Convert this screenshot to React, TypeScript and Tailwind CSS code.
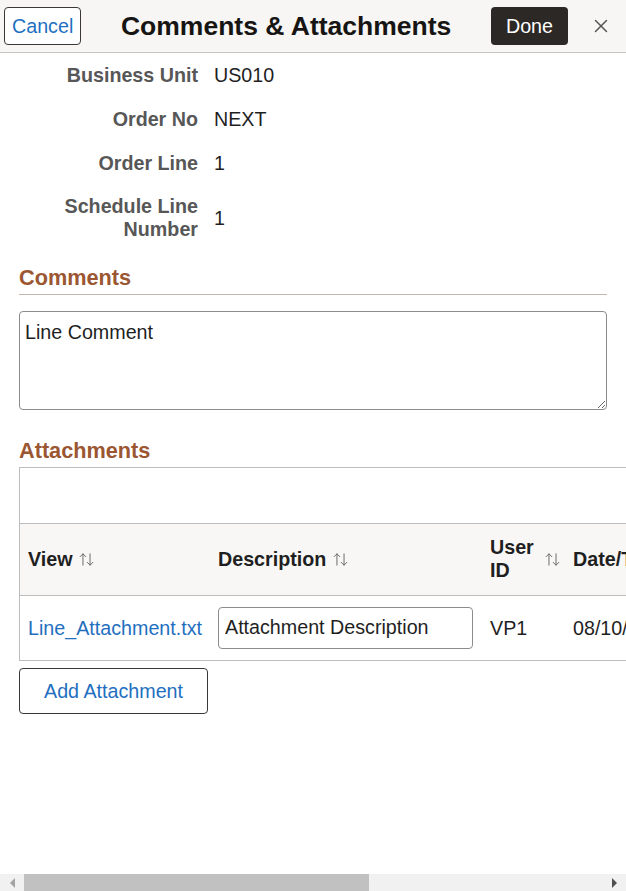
import React from 'react';
import { X, ArrowUpDown } from 'lucide-react';

const font = { fontFamily: '"Liberation Sans", Arial, sans-serif' };

const fields = [
  { label: 'Business Unit', value: 'US010' },
  { label: 'Order No', value: 'NEXT' },
  { label: 'Order Line', value: '1' },
];

const SortIcon = () => (
  <ArrowUpDown className="inline-block h-[17px] w-[17px] align-[-2px] text-[#6b6b6b]" strokeWidth={1.4} />
);

// static horizontal scrollbar shown at the bottom of the dialog
const ScrollBar = () => (
  <div className="flex h-[17px] shrink-0 items-center bg-[#f1f1f1]">
    <div className="flex w-[24px] justify-center">
      <div className="h-0 w-0 border-y-[5px] border-r-[5px] border-y-transparent border-r-[#a3a3a3]" />
    </div>
    <div className="h-full w-[345px] self-end bg-[#c1c1c1]" />
    <div className="flex-1" />
    <div className="flex w-[24px] justify-center">
      <div className="h-0 w-0 border-y-[5px] border-l-[5px] border-y-transparent border-l-[#505050]" />
    </div>
  </div>
);

export default function App() {
  return (
    <div className="flex h-[891px] w-full flex-col overflow-hidden bg-white text-[19.7px] leading-[24px] text-[#1f1f1f]" style={font}>
      {/* Header */}
      <div className="flex h-[53px] shrink-0 items-center border-b border-[#c8c4bf] bg-[#f7f6f4] pl-1 pr-[14px]">
        <button className="h-[38px] rounded-[4px] border border-[#3b3835] bg-white px-[7px] text-[19.7px] text-[#1f6fbf]">
          Cancel
        </button>
        <h1 className="flex-1 text-center text-[26.5px] font-bold text-[#161513]">Comments &amp; Attachments</h1>
        <button className="h-[38px] rounded-[4px] bg-[#2b2825] px-[15px] text-[19.7px] text-white">Done</button>
        <X className="ml-[22px] h-[22px] w-[22px] text-[#555]" strokeWidth={1.6} />
      </div>

      {/* Body */}
      <div className="flex-1 overflow-hidden">
        <div className="w-full">
          <div>
            {fields.map((f) => (
              <div key={f.label} className="flex h-[44px] items-center">
                <div className="w-[198px] text-right font-bold text-[#575757]">{f.label}</div>
                <div className="pl-[16px]">{f.value}</div>
              </div>
            ))}
            <div className="mt-[10px] flex items-center">
              <div className="w-[198px] text-right font-bold leading-[23px] text-[#575757]">
                Schedule Line
                <br />
                Number
              </div>
              <div className="pl-[16px]">1</div>
            </div>
          </div>

          <div className="px-[19px] pt-[24px]">
            <h2 className="border-b border-[#c2b8b0] pb-[3px] text-[21.7px] leading-[26px] font-bold text-[#9b5632]">
              Comments
            </h2>
            <textarea
              className="mt-[16px] block h-[99px] w-full resize-y rounded-[4px] border border-[#8c8c8c] px-[5px] py-[8px] text-[19.7px] leading-[24px] text-[#1f1f1f]"
              style={font}
              defaultValue="Line Comment"
            />
            <h2 className="mt-[28px] text-[21.7px] leading-[26px] font-bold text-[#9b5632]">Attachments</h2>
          </div>

          <div className="pl-[19px] pt-[3px]">
            <div className="w-[1055px] border-y border-l border-[#bdbdbd]">
              <div className="h-[56px] border-b border-[#bdbdbd]" />
              <table className="w-full table-fixed border-collapse">
                <colgroup>
                  <col className="w-[190px]" />
                  <col className="w-[271px]" />
                  <col className="w-[83px]" />
                  <col className="w-[230px]" />
                  <col className="w-[280px]" />
                </colgroup>
                <thead>
                  <tr className="h-[71px] border-b border-[#bdbdbd] bg-[#f8f7f5] text-left">
                    <th className="pl-[8px] font-bold">
                      View <SortIcon />
                    </th>
                    <th className="pl-[8px] font-bold">
                      Description <SortIcon />
                    </th>
                    <th className="pl-[9px] font-bold">
                      <div className="flex items-center">
                        <span className="leading-[23px]">
                          User
                          <br />
                          ID
                        </span>
                        <span className="ml-[10px]">
                          <SortIcon />
                        </span>
                      </div>
                    </th>
                    <th className="pl-[9px] font-bold whitespace-nowrap">
                      Date/Time <SortIcon />
                    </th>
                    <th className="pl-[9px] font-bold whitespace-nowrap">Delete</th>
                  </tr>
                </thead>
                <tbody>
                  <tr className="h-[65px]">
                    <td className="pl-[8px] text-[#1f6fbf] whitespace-nowrap">Line_Attachment.txt</td>
                    <td className="pl-[8px] pr-[8px]">
                      <input
                        className="h-[42px] w-[255px] rounded-[4px] border border-[#8c8c8c] px-[6px] text-[19.7px] text-[#1f1f1f]"
                        style={font}
                        defaultValue="Attachment Description"
                      />
                    </td>
                    <td className="pl-[9px]">VP1</td>
                    <td className="pl-[9px] whitespace-nowrap">08/10/</td>
                    <td className="pl-[9px]" />
                  </tr>
                </tbody>
              </table>
            </div>
            <button className="mt-[7px] h-[46px] rounded-[4px] border border-[#3b3835] bg-white px-[24px] text-[19.7px] text-[#1f6fbf]">
              Add Attachment
            </button>
          </div>
        </div>
      </div>

      <ScrollBar />
    </div>
  );
}
